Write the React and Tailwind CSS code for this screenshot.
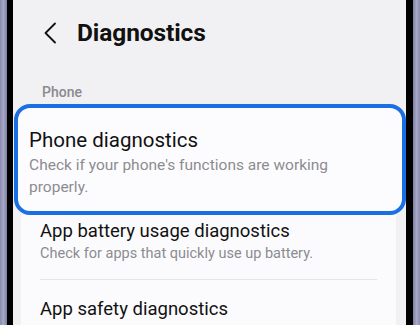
import React from 'react';

const font = { fontFamily: 'Roboto, "Noto Sans", sans-serif' };

const App = () => {
  return (
    <div className="flex w-[420px] h-[325px] overflow-hidden" style={font}>
      {/* left frame */}
      <div className="w-[8px] h-full bg-gradient-to-r from-[#8b8cae] via-[#a6a8c6] to-[#7e7fa2]" />
      <div className="w-[6px] h-full bg-black" />

      {/* screen */}
      <div className="flex-1 h-full bg-[#f1f1f3] flex flex-col">
        {/* header */}
        <div className="flex items-center h-[66px] pl-[30px]">
          <svg width="14" height="22" viewBox="0 0 14 22" fill="none">
            <path d="M12 1.5 L2.5 11 L12 20.5" stroke="#111" strokeWidth="1.8" strokeLinecap="round" strokeLinejoin="round" />
          </svg>
          <h1 className="ml-[20px] text-[24.5px] font-bold text-[#111] tracking-[-0.1px]">Diagnostics</h1>
        </div>

        {/* section label */}
        <div className="pl-[29px] pt-[16px] h-[38px] text-[14px] font-medium text-[#8a8a8f]">Phone</div>

        {/* highlighted item */}
        <div className="ml-[1px] w-[392px] h-[111px] rounded-[16px] border-[4px] border-[#1a6fe2] bg-[#fcfcff] pl-[11px] pt-[18px]">
          <div className="text-[20.5px] leading-[28px] text-[#111]">Phone diagnostics</div>
          <div className="text-[15.5px] leading-[22px] text-[#8c8c90] pr-[40px]">
            Check if your phone's functions are working properly.
          </div>
        </div>

        {/* remaining list */}
        <div className="ml-[8px] mr-[10px] flex-1 bg-[#fbfbfe]">
          <div className="pl-[19px] pr-[19px] pt-[3px]">
            <div className="text-[18.5px] leading-[26px] text-[#111]">App battery usage diagnostics</div>
            <div className="text-[14.5px] leading-[20px] text-[#8c8c90]">Check for apps that quickly use up battery.</div>
            <div className="mt-[15px] h-px bg-[#e4e4e8]" />
            <div className="pt-[16px] text-[18.5px] leading-[26px] text-[#111]">App safety diagnostics</div>
          </div>
        </div>
      </div>

      {/* right frame */}
      <div className="w-[7px] h-full bg-black" />
      <div className="w-[8px] h-full bg-gradient-to-r from-[#7e7fa2] via-[#a6a8c6] to-[#8b8cae]" />
    </div>
  );
};

export default App;
